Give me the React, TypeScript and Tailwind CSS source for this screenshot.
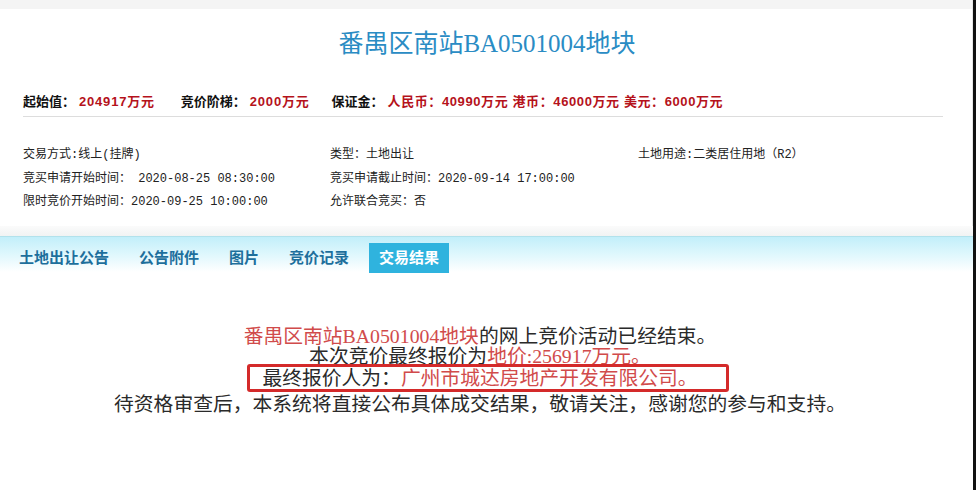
import React from "react";

const sans = "font-['Liberation_Sans','Noto_Sans_CJK_SC',sans-serif]";
const mono = "font-['Liberation_Mono','Noto_Sans_CJK_SC',monospace]";
const serif = "font-['Liberation_Serif','Noto_Sans_CJK_SC',serif]";

const tabs = ["土地出让公告", "公告附件", "图片", "竞价记录", "交易结果"];

// 地块基本信息，三列
const infoRows = [
  ["交易方式:线上(挂牌)", "类型：土地出让", "土地用途:二类居住用地（R2）"],
  ["竞买申请开始时间： 2020-08-25 08:30:00", "竞买申请截止时间：2020-09-14 17:00:00", ""],
  ["限时竞价开始时间：2020-09-25 10:00:00", "允许联合竞买：否", ""],
];

export default function App() {
  return (
    <div className="flex w-[976px] h-[490px] overflow-hidden bg-white">
      <div className="flex flex-col w-[973px]">
        {/* 顶部灰条 */}
        <div className="h-[9px] bg-[#f4f4f4] border-r border-[#e6e6e6]" />

        {/* 地块信息卡片 */}
        <div className="h-[217px] bg-white border-r border-[#e6e6e6] pt-[18px]">
          <div
            className={`${serif} text-[25px] leading-[34px] text-[#2a8cc4] text-center pl-[2px]`}
          >
            番禺区南站BA0501004地块
          </div>

          <div
            className={`${sans} mx-[23px] mt-[31px] w-[920px] pb-[4px] border-b border-[#dddddd] flex items-center text-[13px] leading-[20px] font-bold text-[#111]`}
          >
            <span>起始值：</span>
            <span className="ml-[4px] tracking-[0.8px] text-[#b5121b]">204917万元</span>
            <span className="ml-[26px]">竞价阶梯：</span>
            <span className="ml-[4px] tracking-[0.8px] text-[#b5121b]">2000万元</span>
            <span className="ml-[22px]">保证金：</span>
            <span className="ml-[4px] tracking-[0.6px] text-[#b5121b]">
              人民币：40990万元 港币：46000万元 美元：6000万元
            </span>
          </div>

          <div
            className={`${mono} mt-[27px] px-[23px] grid grid-cols-[307px_308px_1fr] text-[12px] leading-[23.5px] text-[#222]`}
          >
            {infoRows.map((row, i) =>
              row.map((cell, j) => (
                <div key={`${i}-${j}`} className="whitespace-nowrap">
                  {cell}
                </div>
              ))
            )}
          </div>
        </div>

        {/* 卡片与标签栏之间 */}
        <div className="h-[10px] bg-gradient-to-b from-[#fbfbfb] to-[#f1f3f3]" />

        {/* 标签栏 */}
        <div className="h-[36px] pt-[6px] border-t border-[#b2e2ec] bg-[linear-gradient(to_bottom,#c2effa,#e2f8fd_55%,#ffffff)]">
          <div className={`${sans} flex gap-[10px] ml-[9px]`}>
            {tabs.map((t, i) => (
              <div
                key={t}
                className={`h-[30px] px-[10px] flex items-center text-[15px] font-bold ${
                  i === tabs.length - 1
                    ? "bg-[#2fb3de] text-white"
                    : "text-[#1d6f9c]"
                }`}
              >
                {t}
              </div>
            ))}
          </div>
        </div>

        {/* 交易结果 */}
        <div
          className={`${serif} w-[960px] pt-[54px] text-center text-[19.8px] leading-[20px] text-[#2a2a2a]`}
        >
          <div>
            <span className="text-[#d14b4b]">番禺区南站BA0501004地块</span>
            的网上竞价活动已经结束。
          </div>
          <div>
            本次竞价最终报价为
            <span className="text-[#d14b4b]">地价:256917万元。</span>
          </div>
          <div className="-mt-[2px]">
            <span className="inline-block ml-[16px] h-[28px] leading-[22px] pl-[12px] pr-[28px] border-[3px] border-[#d42a2a] rounded-[3px]">
              最终报价人为：
              <span className="text-[#d14b4b]">广州市城达房地产开发有限公司。</span>
            </span>
          </div>
          <div className="mt-[2px]">
            待资格审查后，本系统将直接公布具体成交结果，敬请关注，感谢您的参与和支持。
          </div>
        </div>
      </div>
      <div className="w-[3px] bg-[#111]" />
    </div>
  );
}
